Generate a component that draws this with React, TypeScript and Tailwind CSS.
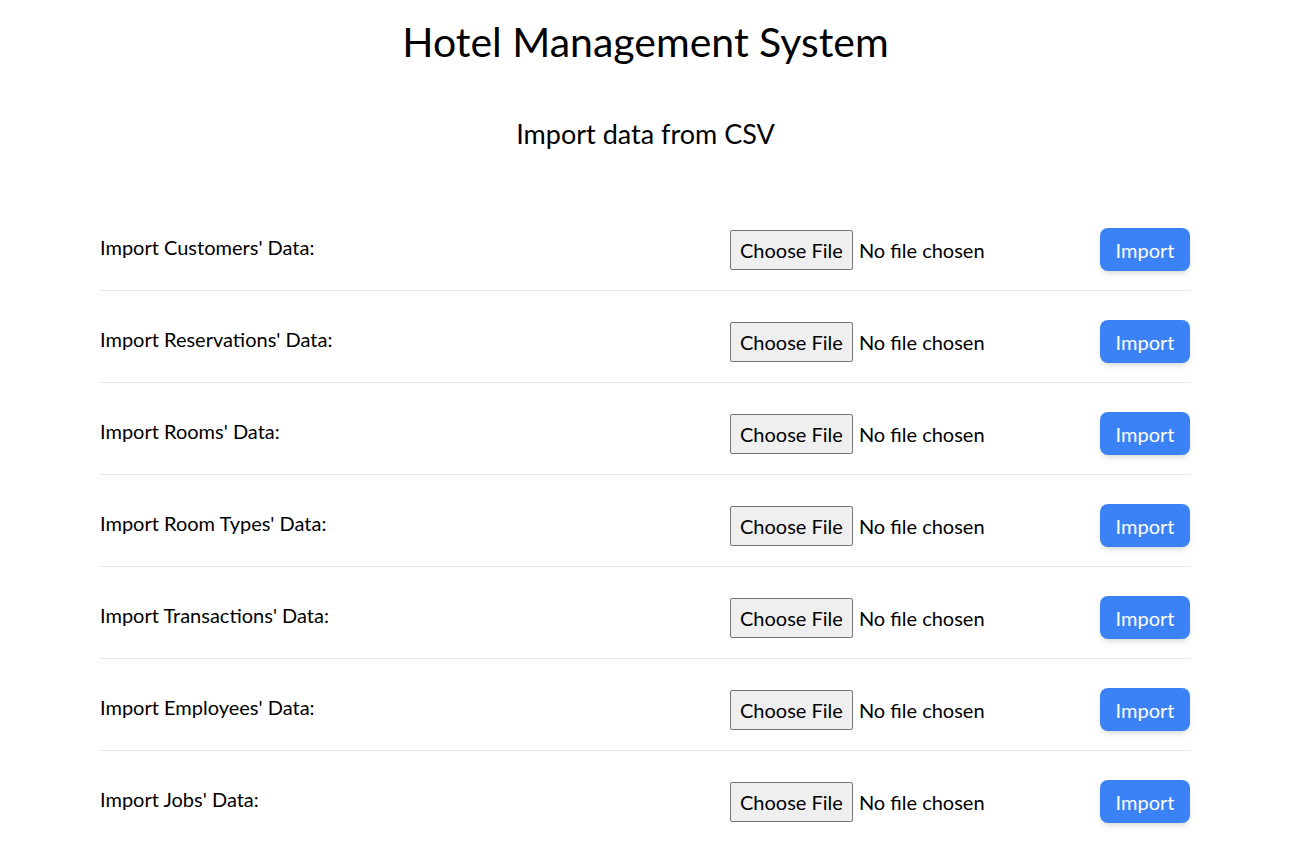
const rows = [
  "Import Customers' Data:",
  "Import Reservations' Data:",
  "Import Rooms' Data:",
  "Import Room Types' Data:",
  "Import Transactions' Data:",
  "Import Employees' Data:",
  "Import Jobs' Data:",
];

function FileRow({ label, last }: { label: string; last: boolean }) {
  return (
    <div
      className={`grid grid-cols-[630px_1fr_auto] items-center pt-[29px] pb-[19px] ${
        last ? "" : "border-b border-gray-200"
      }`}
    >
      <span className="text-[20px] text-black -mt-[5px]">{label}</span>
      <div className="flex items-center">
        <span className="h-[40px] px-[9px] flex items-center bg-[#efefef] border border-[#767676] rounded-[2px] text-[20px] text-black">
          Choose File
        </span>
        <span className="ml-[6px] text-[20px] text-black">No file chosen</span>
      </div>
      <button className="h-[43px] w-[90px] rounded-lg bg-[#3b82f6] text-white text-[20px] shadow-md">
        Import
      </button>
    </div>
  );
}

export default function App() {
  return (
    <div className="min-h-screen bg-white font-['Lato',sans-serif]">
      <h1 className="text-center text-[41px] leading-none pt-[21px] text-black">
        Hotel Management System
      </h1>
      <h2 className="text-center text-[27px] leading-none mt-[58px] text-black">
        Import data from CSV
      </h2>
      <div className="ml-[100px] w-[1090px] mt-[52px]">
        {rows.map((r, i) => (
          <FileRow key={r} label={r} last={i === rows.length - 1} />
        ))}
      </div>
    </div>
  );
}
